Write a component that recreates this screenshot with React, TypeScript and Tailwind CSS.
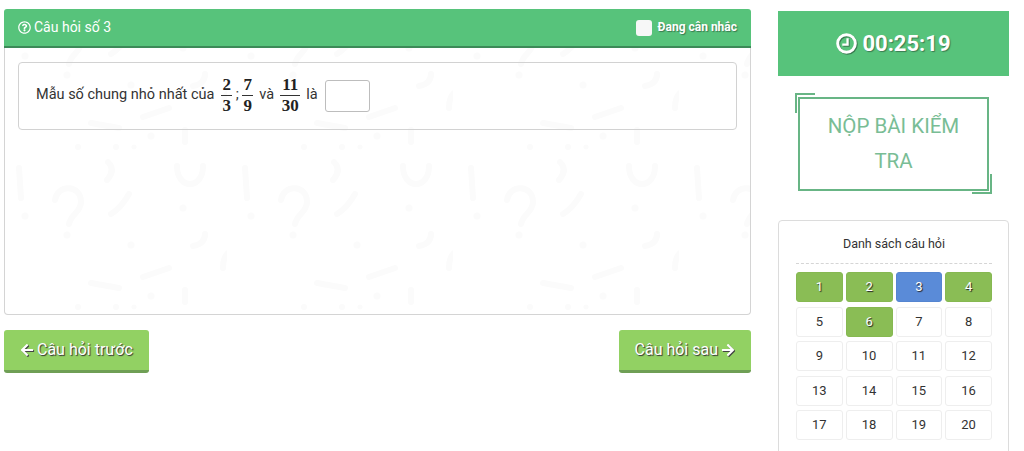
import { FaRegQuestionCircle, FaArrowLeft, FaArrowRight } from "react-icons/fa";

const font = { fontFamily: "Roboto, 'Noto Sans', sans-serif" };

function Frac({ n, d, wide }: { n: string; d: string; wide?: boolean }) {
  return (
    <span className={`inline-flex flex-col items-center font-['Liberation_Serif',serif] font-bold text-[17px] leading-[18px] text-[#222] ${wide ? "w-[20px]" : "w-[11px]"}`}>
      <span className="pb-[1px]">{n}</span>
      <span className="w-full text-center pt-[1px] border-t border-[#333]">{d}</span>
    </span>
  );
}

function Cell({ v }: { v: number }) {
  const green = [1, 2, 4, 6].includes(v);
  const blue = v === 3;
  const cls = green
    ? "bg-[#8abd55] border-[#86b851] text-white [text-shadow:1px_1px_1px_#222]"
    : blue
      ? "bg-[#5a8bd8] border-[#5585d0] text-white [text-shadow:1px_1px_1px_#222]"
      : "bg-white border-[#eeeeee] text-[#333]";
  return (
    <div className={`h-[30px] flex items-center justify-center rounded-[3px] border text-[13px] ${cls}`}>{v}</div>
  );
}

function Pattern() {
  return (
    <svg className="absolute inset-0 w-full h-full pointer-events-none" aria-hidden="true">
      <defs>
        <pattern id="marks" width="226" height="160" patternUnits="userSpaceOnUse" patternTransform="translate(-4,102)">
          <g fill="none" stroke="#fbfbfb" strokeWidth="6" strokeLinecap="round">
            <path d="M18 18 L20 48" />
            <path d="M54 50 C56 34 80 34 80 52 C80 62 70 64 68 74" />
            <path d="M128 44 Q120 58 110 64" />
            <path d="M107 12 Q115 20 106 30" />
            <path d="M176 16 C176 40 202 40 202 16" />
            <path d="M222 118 C222 92 248 96 248 122" />
            <path d="M90 133 L118 138" />
            <path d="M142 127 L168 118" />
            <path d="M184 140 L184 152" />
            <path d="M192 96 Q204 94 204 84" />
          </g>
          <g fill="#fbfbfb">
            <circle cx="24" cy="66" r="3.5" />
            <circle cx="66" cy="85" r="3.5" />
            <circle cx="182" cy="58" r="3.5" />
            <circle cx="130" cy="95" r="3.5" />
            <circle cx="150" cy="146" r="3.5" />
            <circle cx="77" cy="157" r="3" />
            <circle cx="115" cy="157" r="3" />
            <circle cx="133" cy="157" r="2.5" />
          </g>
        </pattern>
      </defs>
      <rect width="100%" height="100%" fill="url(#marks)" />
    </svg>
  );
}

function ClockIcon() {
  return (
    <svg width="21" height="21" viewBox="0 0 20 20" fill="none" stroke="currentColor" strokeWidth="2.8" className="[filter:drop-shadow(1px_1px_0_#3a7a50)]">
      <circle cx="10" cy="10" r="8.4" />
      <path d="M11 5 V11 H6" strokeWidth="2.2" />
    </svg>
  );
}

function NavButton({ children, className }: { children: React.ReactNode; className?: string }) {
  return (
    <button
      className={`h-[43px] px-[16px] flex items-center gap-[3px] rounded-[3px] bg-[#92d163] border-b-[3px] border-[#6f9f55] text-[16px] text-white [text-shadow:1px_1px_1px_#333] ${className ?? ""}`}
    >
      {children}
    </button>
  );
}

const arrowCls = "text-[14px] [filter:drop-shadow(1px_1px_0_#444)]";

export default function App() {
  const cells = Array.from({ length: 20 }, (_, i) => i + 1);
  return (
    <div className="h-[451px] w-[1024px] overflow-hidden bg-white flex text-[#333]" style={font}>
      <div className="w-[747px] ml-[4px] pt-[9px] shrink-0">
        <div className="h-[39px] rounded-t-[3px] bg-[#57c37b] border-b-2 border-[#3c8a58] flex items-center justify-between pl-[14px] pr-[14px] text-white">
          <div className="flex items-center gap-[3px] text-[14px]">
            <FaRegQuestionCircle className="text-[13px]" />
            <span>Câu hỏi số 3</span>
          </div>
          <div className="flex items-center gap-[6px] text-[12px] font-bold [text-shadow:1px_1px_1px_#3a7a50]">
            <span className="w-[16px] h-[16px] rounded-[3px] bg-[#f7f7f7]" />
            <span className="relative -top-[1px]">Đang cân nhắc</span>
          </div>
        </div>
        <div className="relative h-[267px] bg-white border-x border-b border-[#d4d4d4] rounded-b-[4px] px-[13px] pt-[14px]">
          <Pattern />
          <div className="relative h-[68px] rounded-[4px] border border-[#d2d2d2] flex items-center pl-[18px] text-[14.5px] text-[#333]">
            <span className="-ml-[1px] relative -top-[1px]">Mẫu số chung nhỏ nhất của</span>
            <span className="ml-[7px] flex items-center relative -top-[1px]">
              <Frac n="2" d="3" />
              <span className="w-[10px] text-center">;</span>
              <Frac n="7" d="9" />
            </span>
            <span className="ml-[6px] relative -top-[1px]">và</span>
            <span className="ml-[6px] relative -top-[1px] flex"><Frac n="11" d="30" wide /></span>
            <span className="ml-[6px] relative -top-[1px]">là</span>
            <span className="ml-[7px] w-[45px] h-[32px] rounded-[3px] border border-[#bdbdbd] bg-white" />
          </div>
        </div>
        <div className="flex justify-between mt-[15px]">
          <NavButton>
            <FaArrowLeft className={arrowCls} />
            <span>Câu hỏi trước</span>
          </NavButton>
          <NavButton>
            <span>Câu hỏi sau</span>
            <FaArrowRight className={arrowCls} />
          </NavButton>
        </div>
      </div>

      <div className="w-[231px] ml-[27px] pt-[11px] shrink-0">
        <div className="h-[65px] bg-[#57c37b] flex items-center justify-center gap-[5px] text-white text-[22px] font-bold [text-shadow:1px_1px_1px_#3a7a50]">
          <ClockIcon />
          <span>00:25:19</span>
        </div>
        <div className="relative mx-[20px] mt-[21px] w-[191px] h-[94px] border-2 border-[#68b585] flex items-center justify-center text-center text-[#79bd95] text-[20.5px] leading-[35px] px-[10px]">
          <span className="absolute -left-[5px] -top-[6px] w-[20px] h-[20px] border-l-2 border-t-2 border-[#68b585]" />
          <span className="absolute -right-[5px] -bottom-[5px] w-[20px] h-[20px] border-r-2 border-b-2 border-[#68b585]" />
          NỘP BÀI KIỂM TRA
        </div>
        <div className="mt-[29px] h-[300px] rounded-[4px] border border-[#dcdcdc] bg-white pl-[17px] pr-[16px] pt-[14px]">
          <div className="text-center text-[12.5px] leading-[18px] text-[#333] pb-[10px] border-b border-dashed border-[#d5d5d5]">
            Danh sách câu hỏi
          </div>
          <div className="grid grid-cols-4 gap-x-[3px] gap-y-[4.5px] mt-[8px]">
            {cells.map((v) => (
              <Cell key={v} v={v} />
            ))}
          </div>
        </div>
      </div>
    </div>
  );
}
